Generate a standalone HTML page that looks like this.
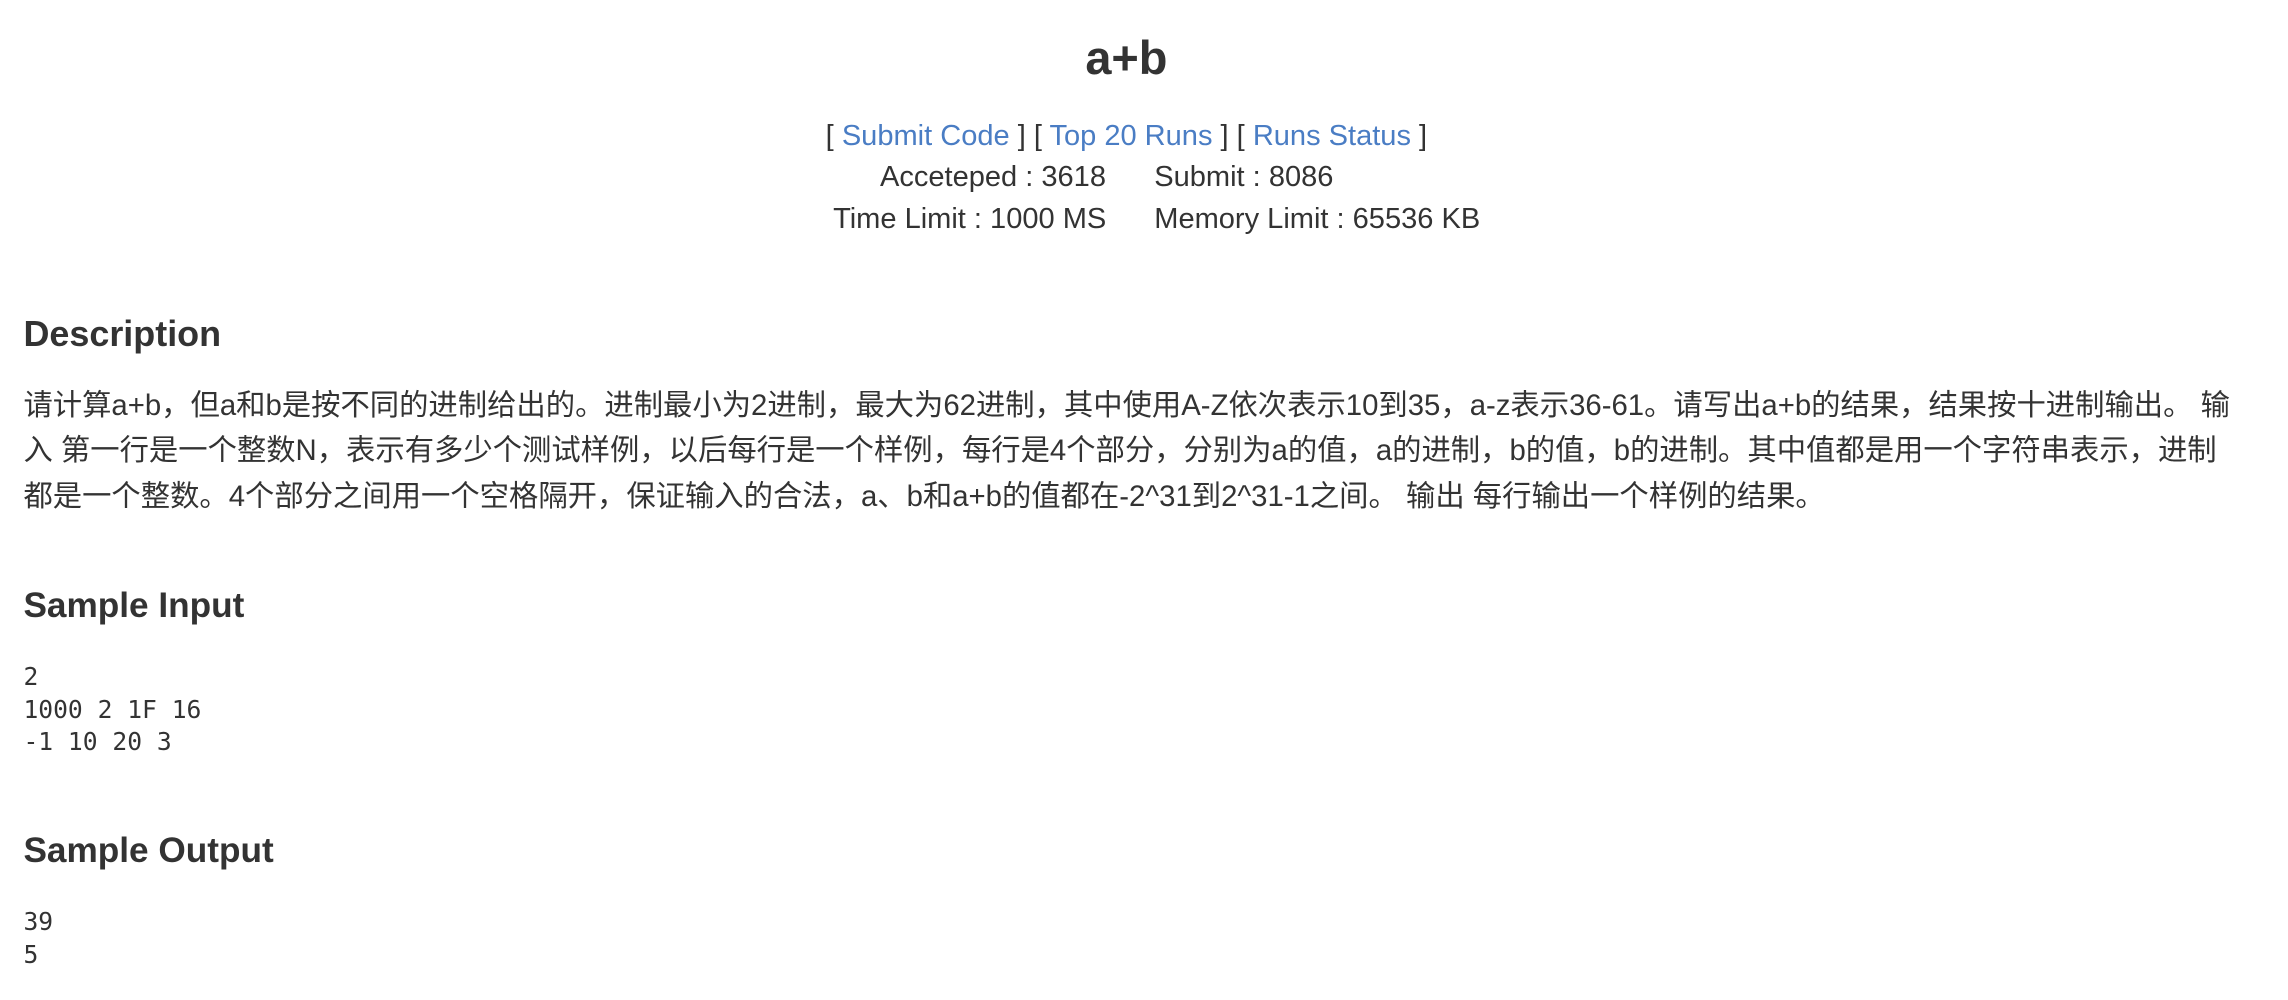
<!DOCTYPE html>
<html><head><meta charset="utf-8"><style>
html,body{margin:0;padding:0;background:#fff}
body{zoom:1.46667;width:1560px;height:682px;position:relative;overflow:hidden;color:#333;font-family:"Liberation Sans","Noto Sans CJK SC",sans-serif}
.a{position:absolute;white-space:nowrap}
.c{left:0;width:1536px;text-align:center}
a{color:#4a7dc4;text-decoration:none}
.m{font-family:"DejaVu Sans Mono","Liberation Mono",monospace;font-size:16.8px;line-height:22px}
.t{font-size:19.8px;line-height:24px}
</style></head><body>
<div class="a c" style="top:20px;font-size:32px;font-weight:bold;line-height:40px">a+b</div>
<div class="a c t" style="top:81px;">[ <a>Submit Code</a> ] [ <a>Top 20 Runs</a> ] [ <a>Runs Status</a> ]</div>
<div class="a t" style="top:109px;left:600px">Acceteped : 3618</div>
<div class="a t" style="top:109px;left:787px">Submit : 8086</div>
<div class="a t" style="top:138px;left:568px">Time Limit : 1000 MS</div>
<div class="a t" style="top:138px;left:787px">Memory Limit : 65536 KB</div>
<div class="a" style="top:213px;left:16px;font-size:24.5px;font-weight:bold;line-height:30px">Description</div>
<div class="a" style="top:261px;left:16px;font-size:20px;line-height:31px">请计算a+b，但a和b是按不同的进制给出的。进制最小为2进制，最大为62进制，其中使用A-Z依次表示10到35，a-z表示36-61。请写出a+b的结果，结果按十进制输出。 输<br>入 第一行是一个整数N，表示有多少个测试样例，以后每行是一个样例，每行是4个部分，分别为a的值，a的进制，b的值，b的进制。其中值都是用一个字符串表示，进制<br>都是一个整数。4个部分之间用一个空格隔开，保证输入的合法，a、b和a+b的值都在-2^31到2^31-1之间。 输出 每行输出一个样例的结果。</div>
<div class="a" style="top:398px;left:16px;font-size:24px;font-weight:bold;line-height:30px">Sample Input</div>
<div class="a m" style="top:451px;left:16px">2<br>1000 2 1F 16<br>-1 10 20 3</div>
<div class="a" style="top:565px;left:16px;font-size:24px;font-weight:bold;line-height:30px">Sample Output</div>
<div class="a m" style="top:618px;left:16px">39<br>5</div>
</body></html>
